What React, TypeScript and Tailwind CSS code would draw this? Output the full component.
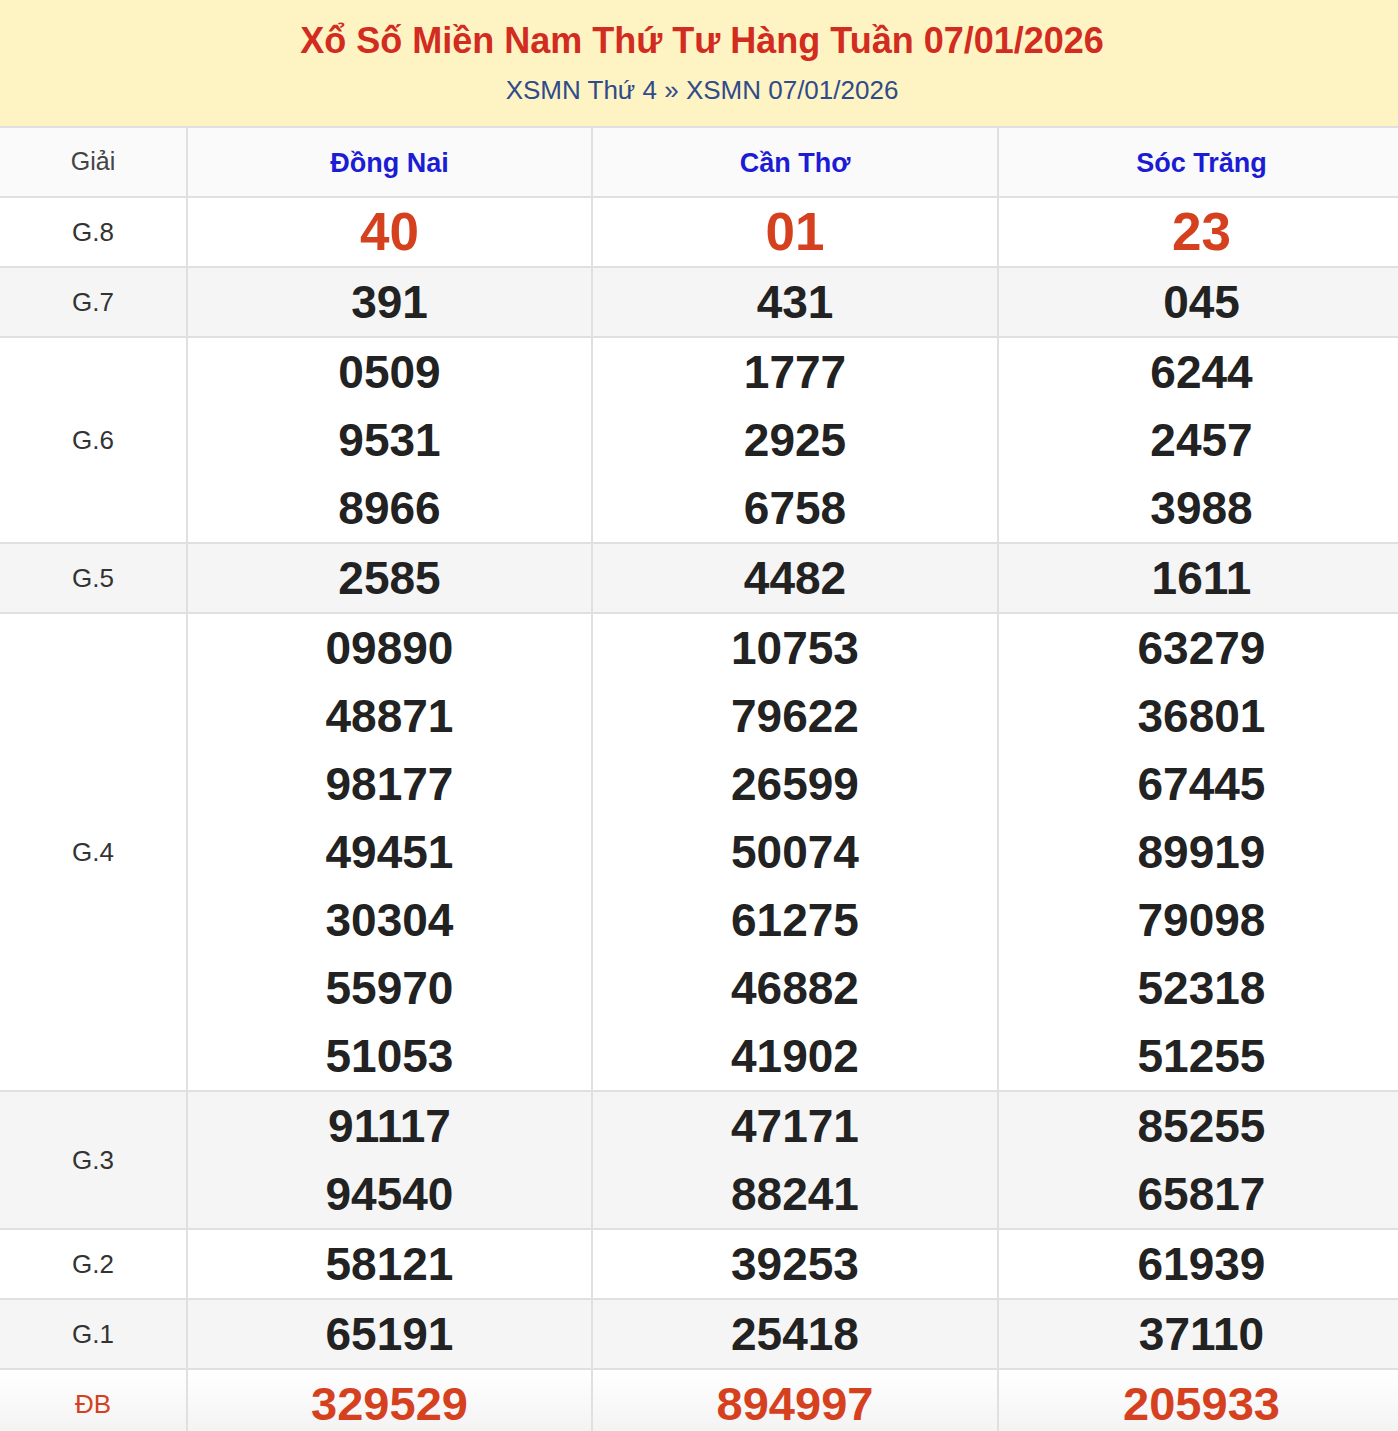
const provinces = ['Đồng Nai', 'Cần Thơ', 'Sóc Trăng']

type Row = {
  label: string
  values: string[][]
  kind?: 'g8' | 'db'
}

const rows: Row[] = [
  { label: 'G.8', kind: 'g8', values: [['40'], ['01'], ['23']] },
  { label: 'G.7', values: [['391'], ['431'], ['045']] },
  {
    label: 'G.6',
    values: [
      ['0509', '9531', '8966'],
      ['1777', '2925', '6758'],
      ['6244', '2457', '3988'],
    ],
  },
  { label: 'G.5', values: [['2585'], ['4482'], ['1611']] },
  {
    label: 'G.4',
    values: [
      ['09890', '48871', '98177', '49451', '30304', '55970', '51053'],
      ['10753', '79622', '26599', '50074', '61275', '46882', '41902'],
      ['63279', '36801', '67445', '89919', '79098', '52318', '51255'],
    ],
  },
  {
    label: 'G.3',
    values: [
      ['91117', '94540'],
      ['47171', '88241'],
      ['85255', '65817'],
    ],
  },
  { label: 'G.2', values: [['58121'], ['39253'], ['61939']] },
  { label: 'G.1', values: [['65191'], ['25418'], ['37110']] },
  { label: 'ĐB', kind: 'db', values: [['329529'], ['894997'], ['205933']] },
]

const font = { fontFamily: '"Liberation Sans", Arial, Helvetica, sans-serif' }

export default function App() {
  return (
    <div className="w-full overflow-x-hidden bg-white" style={font}>
      <div className="w-[1404px]">
        {/* title */}
        <div className="h-[126px] bg-[#fef3c2] flex flex-col items-center pt-[18px]">
          <h1 className="text-[36px] leading-[46px] font-bold text-[#d22b1f]">
            Xổ Số Miền Nam Thứ Tư Hàng Tuần 07/01/2026
          </h1>
          <div className="mt-[9px] text-[26px] leading-[34px] text-[#2f4b8c]">
            <span>XSMN Thứ 4</span> » <span>XSMN 07/01/2026</span>
          </div>
        </div>

        {/* results table */}
        <div className="border-t-2 border-[#e0e0e0]">
          <div className="grid grid-cols-[188px_405px_406px_405px] bg-[#fafafa] border-b-2 border-[#e0e0e0]">
            <div className="h-[68px] flex items-center justify-center text-[25px] text-[#444] border-r-2 border-[#e0e0e0]">
              Giải
            </div>
            {provinces.map((p, i) => (
              <div
                key={p}
                className={`h-[68px] pt-[2px] flex items-center justify-center text-[27px] font-bold text-[#1c1cd4] ${
                  i < 2 ? 'border-r-2 border-[#e0e0e0]' : ''
                }`}
              >
                {p}
              </div>
            ))}
          </div>

          {rows.map((row, ri) => {
            const isGray = ri % 2 === 1
            const bg =
              row.kind === 'db'
                ? 'bg-gradient-to-b from-white to-[#f2f2f2]'
                : isGray
                  ? 'bg-[#f5f5f5]'
                  : 'bg-white'
            const numClass =
              row.kind === 'g8'
                ? 'text-[53px] text-[#d5411f]'
                : row.kind === 'db'
                  ? 'text-[47px] text-[#d5411f]'
                  : 'text-[46px] text-[#222]'
            return (
              <div
                key={row.label}
                className={`grid grid-cols-[188px_405px_406px_405px] border-b-2 border-[#e0e0e0] ${bg}`}
              >
                <div
                  className={`flex items-center justify-center text-[26px] border-r-2 border-[#e0e0e0] ${
                    row.kind === 'db' ? 'text-[#d5411f]' : 'text-[#333]'
                  }`}
                >
                  {row.label}
                </div>
                {row.values.map((col, ci) => (
                  <div
                    key={ci}
                    className={`flex flex-col items-center ${ci < 2 ? 'border-r-2 border-[#e0e0e0]' : ''}`}
                  >
                    {col.map((n, ni) => (
                      <div key={ni} className={`h-[68px] leading-[68px] font-bold ${numClass}`}>
                        {n}
                      </div>
                    ))}
                  </div>
                ))}
              </div>
            )
          })}
        </div>
      </div>
    </div>
  )
}
